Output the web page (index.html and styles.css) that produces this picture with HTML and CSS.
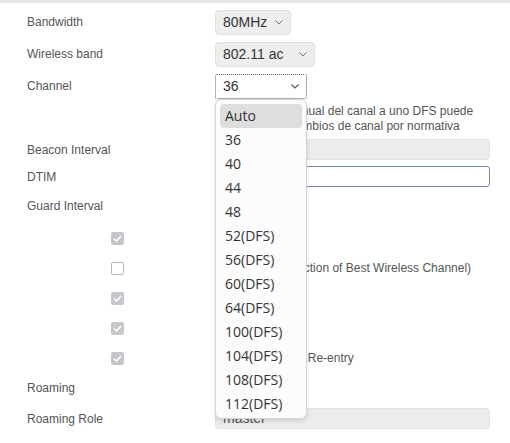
FILE: index.html
```html
<!DOCTYPE html>
<html lang="en">
<head>
    <meta charset="UTF-8">
    <meta name="viewport" content="width=device-width, initial-scale=1.0">
    <title>Wireless Settings</title>
    <link rel="stylesheet" href="styles.css">
</head>
<body>
    <div class="settings">
        <div class="row">
            <div class="label">Bandwidth</div>
            <div class="field">
                <div class="select w-bw">
                    <span>80MHz</span>
                    <svg class="chev" width="8" height="5" viewBox="0 0 8 5"><path d="M0.5 0.5 L4 4 L7.5 0.5" fill="none" stroke="#777" stroke-width="1"/></svg>
                </div>
            </div>
        </div>

        <div class="row">
            <div class="label">Wireless band</div>
            <div class="field">
                <div class="select w-band">
                    <span>802.11 ac</span>
                    <svg class="chev" width="8" height="5" viewBox="0 0 8 5"><path d="M0.5 0.5 L4 4 L7.5 0.5" fill="none" stroke="#777" stroke-width="1"/></svg>
                </div>
            </div>
        </div>

        <div class="row">
            <div class="label">Channel</div>
            <div class="field channel-field">
                <div class="select select-open w-channel">
                    <span>36</span>
                    <svg class="chev" width="8" height="5" viewBox="0 0 8 5"><path d="M0.5 0.5 L4 4 L7.5 0.5" fill="none" stroke="#555" stroke-width="1.2"/></svg>
                </div>
                <ul class="dropdown">
                    <li class="active">Auto</li>
                    <li>36</li>
                    <li>40</li>
                    <li>44</li>
                    <li>48</li>
                    <li>52(DFS)</li>
                    <li>56(DFS)</li>
                    <li>60(DFS)</li>
                    <li>64(DFS)</li>
                    <li>100(DFS)</li>
                    <li>104(DFS)</li>
                    <li>108(DFS)</li>
                    <li>112(DFS)</li>
                </ul>
            </div>
        </div>

        <div class="help">
            La selección manual del canal a uno DFS puede<br>
            causar varios cambios de canal por normativa
        </div>

        <div class="row row-beacon">
            <div class="label">Beacon Interval</div>
            <div class="field">
                <div class="input input-disabled">100</div>
            </div>
        </div>

        <div class="row row-dtim">
            <div class="label">DTIM</div>
            <div class="field">
                <div class="input input-focus">1</div>
            </div>
        </div>

        <div class="row row-guard">
            <div class="label">Guard Interval</div>
            <div class="field">
                <div class="select w-guard">
                    <span>Auto</span>
                </div>
            </div>
        </div>

        <div class="row row-check">
            <div class="label"><span class="check checked"><svg width="9" height="7" viewBox="0 0 9 7"><path d="M1 3.5 L3.5 6 L8 1" fill="none" stroke="#fff" stroke-width="1.6"/></svg></span></div>
            <div class="field desc">Short GI</div>
        </div>

        <div class="row row-check">
            <div class="label"><span class="check"></span></div>
            <div class="field desc">(Automatic Selection of Best Wireless Channel)</div>
        </div>

        <div class="row row-check">
            <div class="label"><span class="check checked"><svg width="9" height="7" viewBox="0 0 9 7"><path d="M1 3.5 L3.5 6 L8 1" fill="none" stroke="#fff" stroke-width="1.6"/></svg></span></div>
            <div class="field desc">WMM</div>
        </div>

        <div class="row row-check">
            <div class="label"><span class="check checked"><svg width="9" height="7" viewBox="0 0 9 7"><path d="M1 3.5 L3.5 6 L8 1" fill="none" stroke="#fff" stroke-width="1.6"/></svg></span></div>
            <div class="field desc">Beamforming</div>
        </div>

        <div class="row row-check">
            <div class="label"><span class="check checked"><svg width="9" height="7" viewBox="0 0 9 7"><path d="M1 3.5 L3.5 6 L8 1" fill="none" stroke="#fff" stroke-width="1.6"/></svg></span></div>
            <div class="field desc">Enable Channel Re-entry</div>
        </div>

        <div class="row row-check">
            <div class="label">Roaming</div>
            <div class="field"></div>
        </div>

        <div class="row row-role">
            <div class="label">Roaming Role</div>
            <div class="field">
                <div class="input input-disabled">master</div>
            </div>
        </div>
    </div>
</body>
</html>
```

FILE: styles.css
```css
body {
    margin: 0;
    font-family: "Liberation Sans", Arial, sans-serif;
    background-color: #fff;
}
.settings {
    border-top: 3px solid #e6e6e6;
    padding: 3px 20px 0 27px;
}
.row {
    display: flex;
    align-items: center;
    height: 32px;
}
.label {
    width: 188px;
    flex-shrink: 0;
    font-size: 12px;
    color: #555;
}
.field {
    flex: 1;
    display: flex;
    align-items: center;
}
.channel-field {
    position: relative;
}
.select {
    box-sizing: border-box;
    height: 25px;
    display: flex;
    align-items: center;
    justify-content: space-between;
    padding: 0 7px 0 7px;
    background-color: #eee;
    border: 1px solid #e0e0e0;
    border-radius: 4px;
    font-size: 14px;
    color: #333;
}
.select-open {
    background-color: #fff;
    border: 1px dotted #666;
    border-radius: 2px;
}
.chev {
    display: block;
    margin-top: 1px;
}
.w-bw {
    width: 76px;
}
.w-band {
    width: 100px;
}
.w-channel {
    width: 92px;
}
.w-guard {
    width: 80px;
}
.dropdown {
    position: absolute;
    top: 25px;
    left: 0;
    z-index: 10;
    box-sizing: border-box;
    width: 92px;
    margin: 0;
    padding: 4px 4px 2px 4px;
    list-style: none;
    background-color: #fcfcfc;
    border: 1px solid #d4d4d4;
    border-radius: 6px;
    box-shadow: 0 2px 4px rgba(0,0,0,0.12);
    font-family: "Open Sans", sans-serif;
    font-size: 14px;
    color: #333;
}
.dropdown li {
    height: 24px;
    line-height: 24px;
    padding-left: 5px;
    border-radius: 4px;
}
.dropdown li.active {
    background-color: #dedede;
}
.help {
    margin: 2px 0 0 188px;
    font-size: 12px;
    line-height: 15px;
    color: #555;
}
.input {
    box-sizing: border-box;
    width: 275px;
    height: 21px;
    padding: 0 7px;
    font-size: 14px;
    line-height: 19px;
    color: #555;
    border-radius: 4px;
}
.input-disabled {
    background-color: #ececec;
    border: 1px solid #e2e2e2;
}
.input-focus {
    background-color: #fff;
    border: 1px solid #7a89aa;
    border-radius: 3px;
}
.row-beacon {
    height: 31px;
}
.row-dtim {
    height: 23px;
}
.row-guard {
    height: 35px;
}
.row-check {
    height: 30px;
}
.row-check .label {
    display: flex;
}
.check {
    box-sizing: border-box;
    width: 13px;
    height: 13px;
    margin-left: 84px;
    border-radius: 2px;
    display: flex;
    align-items: center;
    justify-content: center;
    background-color: #fff;
    border: 1.5px solid #b8b8bc;
}
.check.checked {
    background-color: #c6c6cb;
    border: none;
}
.desc {
    padding-left: 4px;
    font-size: 12px;
    color: #555;
}
.row-role {
    height: 31px;
}
```
